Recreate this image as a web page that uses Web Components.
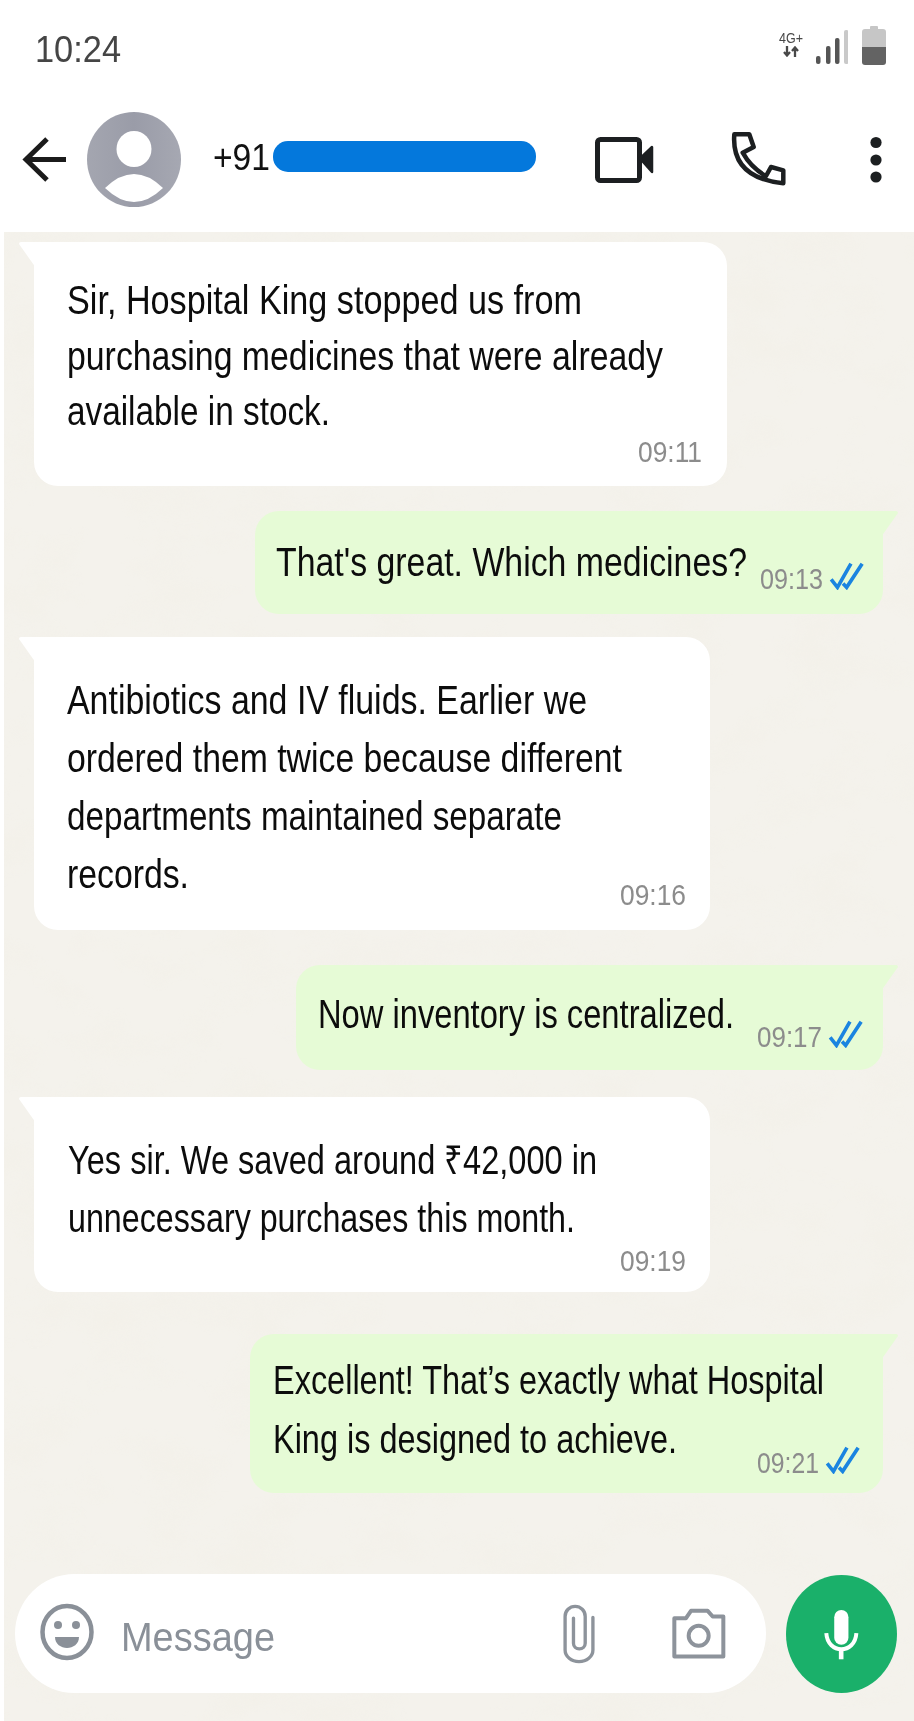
<!DOCTYPE html>
<html>
<head>
<meta charset="utf-8">
<title>Chat</title>
<style>
  html, body { margin: 0; height: 100%; background: #fff; overflow: hidden; }
  chat-app { font-family: "Liberation Sans", Arial, sans-serif; }
</style>
</head>
<body>
<chat-app>
  <chat-bubble side="in" style="--w:693px;--h:244px;--pt:31px;--pl:32.5px;--lh:55.5px;--mt:10px;--mr:25px;--mb:19px">
    <fit-line w="515">Sir, Hospital King stopped us from</fit-line>
    <fit-line w="596">purchasing medicines that were already</fit-line>
    <fit-line w="263">available in stock.</fit-line>
    <msg-meta slot="meta" time="09:11" w="64"></msg-meta>
  </chat-bubble>
  <chat-bubble side="out" style="--w:628px;--h:103px;--pt:21.5px;--pl:21px;--lh:58px;--mt:25px;--side:31px;--mr:19px;--mb:20px">
    <fit-line w="471">That's great. Which medicines?</fit-line>
    <msg-meta slot="meta" time="09:13" w="63" read></msg-meta>
  </chat-bubble>
  <chat-bubble side="in" style="--w:676px;--h:293px;--pt:33.5px;--pl:33px;--lh:58px;--mt:23px;--mr:24px;--mb:20px">
    <fit-line w="520">Antibiotics and IV fluids. Earlier we</fit-line>
    <fit-line w="555">ordered them twice because different</fit-line>
    <fit-line w="495">departments maintained separate</fit-line>
    <fit-line w="122">records.</fit-line>
    <msg-meta slot="meta" time="09:16" w="66"></msg-meta>
  </chat-bubble>
  <chat-bubble side="out" style="--w:587px;--h:105px;--pt:19.5px;--pl:22px;--lh:58px;--mt:35px;--side:31px;--mr:20px;--mb:18px">
    <fit-line w="416">Now inventory is centralized.</fit-line>
    <msg-meta slot="meta" time="09:17" w="65" read></msg-meta>
  </chat-bubble>
  <chat-bubble side="in" style="--w:676px;--h:195px;--pt:33.5px;--pl:34px;--lh:58.5px;--mt:27px;--mr:24px;--mb:16px">
    <fit-line w="529">Yes sir. We saved around ₹42,000 in</fit-line>
    <fit-line w="507">unnecessary purchases this month.</fit-line>
    <msg-meta slot="meta" time="09:19" w="66"></msg-meta>
  </chat-bubble>
  <chat-bubble side="out" style="--w:633px;--h:159px;--pt:17px;--pl:23px;--lh:59px;--mt:42px;--side:31px;--mr:23px;--mb:15px">
    <fit-line w="551">Excellent! That’s exactly what Hospital</fit-line>
    <fit-line w="404">King is designed to achieve.</fit-line>
    <msg-meta slot="meta" time="09:21" w="62" read></msg-meta>
  </chat-bubble>
</chat-app>

<template id="chat-app-tpl">
  <style>
    :host { display: flex; flex-direction: column; width: 914px; height: 1721px; overflow: hidden; }
    .wall { position: relative; flex: 1; margin-left: 4px; background: #f4f2ec; display: flex; flex-direction: column; }
    .grain { position: absolute; inset: 0; width: 100%; height: 100%; }
    .list { position: relative; display: flex; flex-direction: column; }
    chat-composer { position: relative; margin-top: auto; margin-bottom: 28px; }
  </style>
  <status-bar></status-bar>
  <chat-header></chat-header>
  <div class="wall">
    <svg class="grain" aria-hidden="true">
      <filter id="grain" x="0" y="0" width="100%" height="100%">
        <feTurbulence type="fractalNoise" baseFrequency="0.014 0.02" numOctaves="4" seed="7"/>
        <feColorMatrix type="matrix" values="0 0 0 0 0.88  0 0 0 0 0.85  0 0 0 0 0.77  1.6 0 0 0 -0.72"/>
      </filter>
      <rect width="100%" height="100%" filter="url(#grain)" opacity="0.4"/>
    </svg>
    <div class="list"><slot></slot></div>
    <chat-composer></chat-composer>
  </div>
</template>

<template id="status-bar-tpl">
  <style>
    :host { display: flex; height: 100px; box-sizing: border-box; padding: 0 28px 0 35px; justify-content: space-between; align-items: flex-start; background: #fff; }
    .clock { margin-top: 32px; font-size: 37px; line-height: 35px; color: #454545; }
    .right { display: flex; margin-top: 26px; }
    .net { margin-top: 5px; display: flex; flex-direction: column; align-items: center; width: 24px; font-size: 15px; line-height: 14px; color: #484848; }
    .net svg { display: block; margin-top: 1px; }
    .bars { display: block; margin: 4px 0 0 13px; }
    .batt { display: block; margin-left: 14px; }
  </style>
  <div class="clock"><fit-line w="86">10:24</fit-line></div>
  <div class="right">
    <div class="net">
      <fit-line w="24">4G+</fit-line>
      <svg width="16" height="11" viewBox="0 0 16 11" fill="none" stroke="#484848" stroke-width="2.3">
        <path d="M4 0v9M1 6l3 3.5L7 6"/><path d="M12 11V2M9 5l3-3.5L15 5"/>
      </svg>
    </div>
    <svg class="bars" width="32" height="34" viewBox="0 0 32 34">
      <rect x="0" y="26" width="4.5" height="8" rx="2" fill="#555"/>
      <rect x="10" y="16" width="4.5" height="18" rx="2" fill="#555"/>
      <rect x="19" y="8" width="4.5" height="26" rx="2" fill="#555"/>
      <rect x="28" y="0" width="4.5" height="34" rx="2" fill="#c9c9c9"/>
    </svg>
    <svg class="batt" width="24" height="39" viewBox="0 0 24 39">
      <path d="M8 1Q8 0 9 0h6q1 0 1 1v2h5a3 3 0 0 1 3 3v15H0V6a3 3 0 0 1 3-3h5z" fill="#c6c6c6"/>
      <path d="M0 21h24v15a3 3 0 0 1-3 3H3a3 3 0 0 1-3-3z" fill="#636363"/>
    </svg>
  </div>
</template>

<template id="chat-header-tpl">
  <style>
    :host { display: flex; height: 132px; box-sizing: border-box; padding: 0 0 13px 20px; align-items: center; background: #fff; }
    svg { display: block; flex: none; }
    .avatar { margin-left: 17px; }
    .num { margin: 0 0 4px 32px; font-size: 37px; line-height: 40px; color: #111; }
    .mask { margin: 0 0 6px 3px; width: 263px; height: 31px; border-radius: 15px; background: #0478dc; }
    .video { margin-left: 56px; }
    .phone { margin: 0 0 4px 73px; }
    .dots { margin-left: 80px; }
  </style>
  <svg width="50" height="50" viewBox="0 0 50 50" fill="none" stroke="#1b1b1b" stroke-width="5">
    <path d="M46 24.5H6"/><path d="M27 4 6 24.5 27 45"/>
  </svg>
  <svg class="avatar" width="94" height="95" viewBox="0 0 94 95">
    <defs><linearGradient id="av" x1="0" x2="1" y1="0" y2="0"><stop offset="0" stop-color="#a4a6b0"/><stop offset="0.5" stop-color="#9a9ca8"/><stop offset="1" stop-color="#a6a8b2"/></linearGradient></defs>
    <ellipse cx="47" cy="47.5" rx="47" ry="47.5" fill="url(#av)"/>
    <ellipse cx="47" cy="37" rx="17.5" ry="18" fill="#fff"/>
    <path d="M18 76Q47 48 76 76Q47 104 18 76Z" fill="#fff"/>
  </svg>
  <div class="num"><fit-line w="57">+91</fit-line></div>
  <div class="mask"></div>
  <svg class="video" width="64" height="50" viewBox="0 0 64 50" fill="none" stroke="#1c1f21" stroke-width="5" stroke-linejoin="round">
    <rect x="5.5" y="4.5" width="42" height="41" rx="3"/>
    <path d="M48 23.5 60 12V37Z" fill="#1c1f21" stroke-width="2.5"/>
  </svg>
  <svg class="phone" width="60" height="56" viewBox="728 129 60 56" fill="none" stroke="#1c1f21" stroke-width="4.5" stroke-linejoin="round">
    <path d="M733.3 133.3H748.3L752.7 146 741.7 151.7Q750 166.7 765 175L770 166 782.3 169.3V182.3Q730 176.7 733.3 133.3Z"/>
  </svg>
  <svg class="dots" width="14" height="50" viewBox="0 0 14 50" fill="#1c1f21">
    <circle cx="7" cy="7.5" r="5.6"/><circle cx="7" cy="25" r="5.6"/><circle cx="7" cy="42" r="5.6"/>
  </svg>
</template>

<template id="chat-bubble-tpl">
  <style>
    :host { position: relative; box-sizing: border-box; width: var(--w); height: var(--h); margin-top: var(--mt); padding: var(--pt) 0 0 var(--pl); font-size: 40px; line-height: var(--lh); color: #0c0c0c; display: grid; }
    :host([side=in]) { background: #fff; margin-left: 30px; border-radius: 0 24px 24px 24px; }
    :host([side=out]) { background: #e6fbd6; align-self: flex-end; margin-right: var(--side); border-radius: 24px 0 24px 24px; }
    .lines { grid-area: 1 / 1; }
    .meta { grid-area: 1 / 1; align-self: end; justify-self: end; margin: 0 var(--mr) var(--mb) 0; }
    .tail { position: absolute; top: 0; width: 20px; height: 30px; }
    :host([side=in]) .tail { left: -15px; }
    :host([side=out]) .tail { right: -15px; transform: scaleX(-1); }
  </style>
  <svg class="tail" viewBox="0 0 20 30"><path d="M0 2Q0 0 2 0H20V28L17 26Z" fill="var(--tail)"/></svg>
  <div class="lines"><slot></slot></div>
  <div class="meta"><slot name="meta"></slot></div>
</template>

<template id="msg-meta-tpl">
  <style>
    :host { display: flex; align-items: flex-end; font-size: 30px; line-height: 30px; color: #8c8c8c; }
    svg { display: block; margin: 0 0 4px 6px; flex: none; }
  </style>
</template>

<template id="chat-composer-tpl">
  <style>
    :host { display: flex; align-items: center; padding-left: 11px; }
    .pill { display: flex; align-items: center; width: 751px; height: 119px; border-radius: 60px; background: #fff; color: #8a9098; }
    svg { display: block; flex: none; }
    .smile { margin: 0 0 4px 25px; }
    .text { margin-left: 27px; font-size: 41px; line-height: 46px; width: 154px; padding-top: 6px; }
    .clip { margin-left: 285px; }
    .cam { margin-left: 74px; }
    .mic { display: flex; align-items: center; justify-content: center; margin-left: 20px; width: 111px; height: 118px; border-radius: 50%; background: #1ab06a; }
  </style>
  <div class="pill">
    <svg class="smile" width="54" height="58" viewBox="0 0 54 58">
      <ellipse cx="27" cy="29" rx="24.5" ry="26" fill="none" stroke="#8a9098" stroke-width="4.5"/>
      <circle cx="18" cy="22" r="4" fill="#8a9098"/><circle cx="36" cy="22" r="4" fill="#8a9098"/>
      <path d="M15 34H39C39 41 33 45 27 45S15 41 15 34Z" fill="#8a9098"/>
    </svg>
    <div class="text"><fit-line w="154">Message</fit-line></div>
    <svg class="clip" width="37" height="62" viewBox="60 45 110 185" fill="none" stroke="#8d939b" stroke-width="10" stroke-linecap="round">
      <path d="M158 88V185A41.5 35 0 0 1 75 185V85A30 30 0 0 1 135 85V165A17.5 17 0 0 1 100 165V90"/>
    </svg>
    <svg class="cam" width="57" height="52" viewBox="395 60 171 155" fill="none" stroke="#8d939b" stroke-width="12" stroke-linejoin="round">
      <path d="M405 90H440L455 68H505L520 85H552V205H405Z"/>
      <circle cx="478" cy="143" r="30"/>
    </svg>
  </div>
  <div class="mic">
    <svg width="39" height="52" viewBox="845 50 118 155">
      <rect x="882" y="55" width="43" height="105" rx="21.5" fill="#fff"/>
      <path d="M858 125C862 190 945 190 949 125" fill="none" stroke="#fff" stroke-width="12"/>
      <path d="M903 172V204" stroke="#fff" stroke-width="14"/>
    </svg>
  </div>
</template>

<script>
function attachTemplate(el, id) {
    const root = el.attachShadow({ mode: 'open' });
    root.appendChild(document.getElementById(id).content.cloneNode(true));
    return root;
}

class ChatApp extends HTMLElement {
    constructor() {
        super();
        attachTemplate(this, 'chat-app-tpl');
    }
}

class StatusBar extends HTMLElement {
    constructor() {
        super();
        attachTemplate(this, 'status-bar-tpl');
    }
}

class ChatHeader extends HTMLElement {
    constructor() {
        super();
        attachTemplate(this, 'chat-header-tpl');
    }
}

class ChatBubble extends HTMLElement {
    constructor() {
        super();
        attachTemplate(this, 'chat-bubble-tpl');
    }

    connectedCallback() {
        this.style.setProperty('--tail', this.getAttribute('side') === 'in' ? '#fff' : '#e6fbd6');
    }
}

class MsgMeta extends HTMLElement {
    connectedCallback() {
        if (this.shadowRoot) return;
        const root = attachTemplate(this, 'msg-meta-tpl');
        const time = document.createElement('fit-line');
        time.setAttribute('w', this.getAttribute('w'));
        time.textContent = this.getAttribute('time');
        root.appendChild(time);
        if (this.hasAttribute('read')) {
            root.appendChild(document.createRange().createContextualFragment(`
                <svg width="35" height="28" viewBox="330 185 105 85" fill="none" stroke="#1a84e0" stroke-width="11">
                    <path d="M336 238 355 262 396 190"/><path d="M372 250 383 262 430 190"/>
                </svg>`));
        }
    }
}

class ChatComposer extends HTMLElement {
    constructor() {
        super();
        attachTemplate(this, 'chat-composer-tpl');
    }
}

// The text in the reference is squeezed sideways, so each line is scaled to its measured width
class FitLine extends HTMLElement {
    constructor() {
        super();
        this.attachShadow({ mode: 'open' }).innerHTML = `
            <style>
                :host { display: block; white-space: nowrap; }
                span { display: inline-block; transform-origin: 0 50%; }
            </style>
            <span><slot></slot></span>
        `;
    }

    connectedCallback() {
        const target = Number(this.getAttribute('w'));
        const span = this.shadowRoot.querySelector('span');
        this.style.width = target + 'px';
        span.style.transform = `scaleX(${target / span.getBoundingClientRect().width})`;
    }
}

customElements.define('chat-app', ChatApp);
customElements.define('status-bar', StatusBar);
customElements.define('chat-header', ChatHeader);
customElements.define('chat-bubble', ChatBubble);
customElements.define('msg-meta', MsgMeta);
customElements.define('chat-composer', ChatComposer);
customElements.define('fit-line', FitLine);
</script>
</body>
</html>
